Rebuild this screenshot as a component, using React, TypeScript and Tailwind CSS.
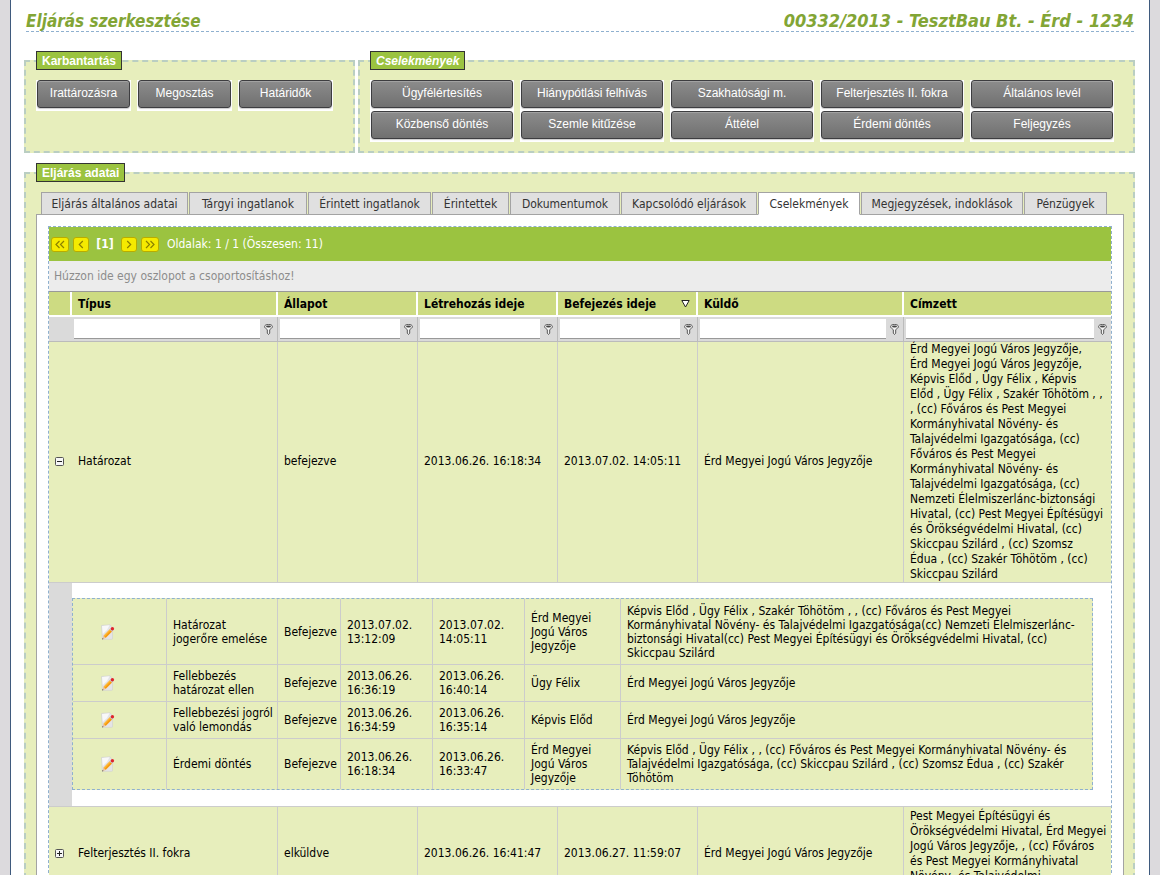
import React from "react";

type TabInfo = { label: string; width: string };

const tabs: TabInfo[] = [
  { label: "Eljárás általános adatai", width: "w-[147px]" },
  { label: "Tárgyi ingatlanok", width: "w-[118px]" },
  { label: "Érintett ingatlanok", width: "w-[123px]" },
  { label: "Érintettek", width: "w-[77px]" },
  { label: "Dokumentumok", width: "w-[110px]" },
  { label: "Kapcsolódó eljárások", width: "w-[136px]" },
  { label: "Cselekmények", width: "w-[102px]" },
  { label: "Megjegyzések, indoklások", width: "w-[162px]" },
  { label: "Pénzügyek", width: "w-[83px]" },
];

const maintenance = ["Irattározásra", "Megosztás", "Határidők"];

const actions = [
  "Ügyfélértesítés",
  "Hiánypótlási felhívás",
  "Szakhatósági m.",
  "Felterjesztés II. fokra",
  "Általános levél",
  "Közbenső döntés",
  "Szemle kitűzése",
  "Áttétel",
  "Érdemi döntés",
  "Feljegyzés",
];

const columns = ["Típus", "Állapot", "Létrehozás ideje", "Befejezés ideje", "Küldő", "Címzett"];

type Row = {
  type: string;
  status: string;
  created: string;
  finished: string;
  sender: string;
  recipients: string[];
};

const rowMain: Row = {
  type: "Határozat",
  status: "befejezve",
  created: "2013.06.26. 16:18:34",
  finished: "2013.07.02. 14:05:11",
  sender: "Érd Megyei Jogú Város Jegyzője",
  recipients: [
    "Érd Megyei Jogú Város Jegyzője,",
    "Érd Megyei Jogú Város Jegyzője,",
    "Képvis Előd , Ügy Félix , Képvis",
    "Előd , Ügy Félix , Szakér Töhötöm , ,",
    ", (cc) Főváros és Pest Megyei",
    "Kormányhivatal Növény- és",
    "Talajvédelmi Igazgatósága, (cc)",
    "Főváros és Pest Megyei",
    "Kormányhivatal Növény- és",
    "Talajvédelmi Igazgatósága, (cc)",
    "Nemzeti Élelmiszerlánc-biztonsági",
    "Hivatal, (cc) Pest Megyei Építésügyi",
    "és Örökségvédelmi Hivatal, (cc)",
    "Skiccpau Szilárd , (cc) Szomsz",
    "Édua , (cc) Szakér Töhötöm , (cc)",
    "Skiccpau Szilárd",
  ],
};

const rowNext: Row = {
  type: "Felterjesztés II. fokra",
  status: "elküldve",
  created: "2013.06.26. 16:41:47",
  finished: "2013.06.27. 11:59:07",
  sender: "Érd Megyei Jogú Város Jegyzője",
  recipients: [
    "Pest Megyei Építésügyi és",
    "Örökségvédelmi Hivatal, Érd Megyei",
    "Jogú Város Jegyzője, , (cc) Főváros",
    "és Pest Megyei Kormányhivatal",
    "Növény- és Talajvédelmi",
    "Igazgatósága",
  ],
};

const details = [
  {
    height: "h-[66px]",
    type: ["Határozat", "jogerőre emelése"],
    created: ["2013.07.02.", "13:12:09"],
    finished: ["2013.07.02.", "14:05:11"],
    sender: ["Érd Megyei", "Jogú Város", "Jegyzője"],
    recipients: [
      "Képvis Előd , Ügy Félix , Szakér Töhötöm , , (cc) Főváros és Pest Megyei",
      "Kormányhivatal Növény- és Talajvédelmi Igazgatósága(cc) Nemzeti Élelmiszerlánc-",
      "biztonsági Hivatal(cc) Pest Megyei Építésügyi és Örökségvédelmi Hivatal, (cc)",
      "Skiccpau Szilárd",
    ],
  },
  {
    height: "h-[37px]",
    type: ["Fellebbezés", "határozat ellen"],
    created: ["2013.06.26.", "16:36:19"],
    finished: ["2013.06.26.", "16:40:14"],
    sender: ["Ügy Félix"],
    recipients: ["Érd Megyei Jogú Város Jegyzője"],
  },
  {
    height: "h-[37px]",
    type: ["Fellebbezési jogról", "való lemondás"],
    created: ["2013.06.26.", "16:34:59"],
    finished: ["2013.06.26.", "16:35:14"],
    sender: ["Képvis Előd"],
    recipients: ["Érd Megyei Jogú Város Jegyzője"],
  },
  {
    height: "h-[50px]",
    type: ["Érdemi döntés"],
    created: ["2013.06.26.", "16:18:34"],
    finished: ["2013.06.26.", "16:33:47"],
    sender: ["Érd Megyei", "Jogú Város", "Jegyzője"],
    recipients: [
      "Képvis Előd , Ügy Félix , , (cc) Főváros és Pest Megyei Kormányhivatal Növény- és",
      "Talajvédelmi Igazgatósága, (cc) Skiccpau Szilárd , (cc) Szomsz Édua , (cc) Szakér",
      "Töhötöm",
    ],
  },
];

function Lines({ lines }: { lines: string[] }) {
  return <div className="whitespace-pre">{lines.join("\n")}</div>;
}

function Panel({ title, italic, className, children }: { title: string; italic?: boolean; className: string; children: React.ReactNode }) {
  return (
    <fieldset className={`min-w-0 border-2 border-dashed border-[#8fb0c8]/50 bg-[#e7eebc] pt-[10px] pr-[9px] pl-[10px] ${className}`}>
      <legend
        className={`border border-[#333333] bg-[#9bc340] px-[5px] pt-px font-['Liberation_Sans',Arial,sans-serif] text-[12px] leading-4 font-bold text-white ${italic ? "italic" : ""}`}
      >
        {title}
      </legend>
      {children}
    </fieldset>
  );
}

function ActionButton({ label, width }: { label: string; width: string }) {
  return (
    <button type="button" className={`h-[31px] bg-white px-px pb-[3px] ${width}`}>
      <span className="block h-7 rounded-[3px] border border-[#3d3d40] bg-linear-to-b from-[#8c8c8c] to-[#707070] font-['Liberation_Sans',Arial,sans-serif] text-[12px] leading-6 text-white shadow-[inset_0_1px_0_#a2a2a2,0_1px_1px_#cccccc]">
        {label}
      </span>
    </button>
  );
}

function PagerButton({ label, double, flip }: { label: string; double?: boolean; flip?: boolean }) {
  return (
    <button
      type="button"
      aria-label={label}
      className={`flex h-[15px] items-center justify-center rounded-[3px] border border-[#b8ac00] bg-[#f5ea00] ${double ? "w-[18px]" : "w-4"}`}
    >
      <svg width={double ? 10 : 6} height="9" viewBox={double ? "0 0 10 9" : "0 0 6 9"} fill="none" stroke="#8a8100" strokeWidth="1.2">
        {double ? (
          <path d={flip ? "M1 1 4.5 4.5 1 8M5.5 1 9 4.5 5.5 8" : "M4.5 1 1 4.5 4.5 8M9 1 5.5 4.5 9 8"} />
        ) : (
          <path d={flip ? "M1.2 1 4.7 4.5 1.2 8" : "M4.8 1 1.3 4.5 4.8 8"} />
        )}
      </svg>
    </button>
  );
}

function FilterIcon() {
  return (
    <svg width="9" height="11" viewBox="0 0 9 11" fill="none">
      <path d="M.6 2.6C.6 1.2 2.2.5 4.5.5s3.9.7 3.9 2.1c0 1.3-1.5 2-2.7 3.1V9.2L4.5 10.5 3.3 9.2V5.7C2.1 4.6.6 3.9.6 2.6Z" fill="#f4f4f4" stroke="#555" strokeWidth="1" />
      <ellipse cx="4.5" cy="2.5" rx="2.5" ry="1.1" fill="#444" />
    </svg>
  );
}

function EditIcon() {
  return (
    <svg width="15" height="16" viewBox="0 0 15 16" fill="none">
      <path d="M1.5 1.5 10 .8 12.5 4v10.5a.8.8 0 0 1-.8.8H3.2a.9.9 0 0 1-.9-.8z" fill="#e4e4e6" stroke="#d0d0d2" strokeWidth=".6" />
      <path d="M2 2 9.5 1.3 7 6 2.8 10z" fill="#f8f8f9" />
      <path d="M4.5 13 11 6.3" stroke="#f79a10" strokeWidth="3.2" />
      <path d="M4 12.3 10.5 5.6" stroke="#ffbe3c" strokeWidth="1.1" />
      <path d="M10.8 6.5 12 5.2" stroke="#c3c6ce" strokeWidth="3.2" />
      <circle cx="12.4" cy="4.7" r="1.7" fill="#e0242c" />
      <path d="M3.4 11.8 2 15.4l3.7-1.3z" fill="#e6c3a0" />
      <path d="M2.6 14 2 15.4l1.5-.5z" fill="#555" />
    </svg>
  );
}

function ExpandButton({ open }: { open?: boolean }) {
  return (
    <button type="button" aria-label={open ? "Összecsukás" : "Kibontás"} className="mx-auto block">
      <svg width="9" height="9" viewBox="0 0 9 9">
        <rect x=".5" y=".5" width="8" height="8" rx="1" fill="#f7f7f7" stroke="#555555" />
        <path d={open ? "M2 4.5h5" : "M2 4.5h5M4.5 2v5"} stroke="#222222" />
      </svg>
    </button>
  );
}

function GridRow({ row, open }: { row: Row; open?: boolean }) {
  const cell = "border-r border-b border-[#cccccc] pb-[2px] px-[6px]";
  return (
    <tr className="h-[95px] bg-[#e7eebc]">
      <td className="border-b border-[#cccccc] pr-[2px] pb-[2px]">
        <ExpandButton open={open} />
      </td>
      <td className={cell}>{row.type}</td>
      <td className={cell}>{row.status}</td>
      <td className={cell}>{row.created}</td>
      <td className={cell}>{row.finished}</td>
      <td className={cell}>{row.sender}</td>
      <td className="border-b border-[#cccccc] pl-[6px]">
        <Lines lines={row.recipients} />
      </td>
    </tr>
  );
}

function DetailTable() {
  const cell = "border-r border-b border-[#cccccc] px-[6px] group-last:border-b-0";
  return (
    <table className="w-full table-fixed border-separate border-spacing-0 border border-dashed border-[#8fb0cf] bg-[#e7eebc] leading-[14px]">
      <colgroup>
        <col className="w-[94px]" />
        <col className="w-[111px]" />
        <col className="w-[63px]" />
        <col className="w-[92px]" />
        <col className="w-[92px]" />
        <col className="w-[96px]" />
        <col />
      </colgroup>
      <tbody>
        {details.map((d, i) => (
          <tr key={i} className={`group ${d.height}`}>
            <td className={cell}>
              <button type="button" aria-label="Szerkesztés" className="ml-[21px] block">
                <EditIcon />
              </button>
            </td>
            <td className={cell}>
              <Lines lines={d.type} />
            </td>
            <td className={cell}>Befejezve</td>
            <td className={cell}>
              <Lines lines={d.created} />
            </td>
            <td className={cell}>
              <Lines lines={d.finished} />
            </td>
            <td className={cell}>
              <Lines lines={d.sender} />
            </td>
            <td className="border-b border-[#cccccc] px-[6px] group-last:border-b-0">
              <Lines lines={d.recipients} />
            </td>
          </tr>
        ))}
      </tbody>
    </table>
  );
}

function Grid() {
  return (
    <div className="border border-dashed border-[#8fb0cf]">
      <div className="flex h-[34px] items-center gap-1 bg-[#9bc340] px-[2px] text-white">
        <PagerButton label="Első oldal" double />
        <PagerButton label="Előző oldal" />
        <span className="w-6 pt-px text-center font-bold">[1]</span>
        <PagerButton label="Következő oldal" flip />
        <PagerButton label="Utolsó oldal" double flip />
        <span className="ml-1 pt-px">Oldalak: 1 / 1 (Összesen: 11)</span>
      </div>
      <div className="h-[31px] border-b border-[#999999] bg-[#ececec] px-[5px] leading-[30px] text-[#8c8c8c]">
        Húzzon ide egy oszlopot a csoportosításhoz!
      </div>
      <table className="w-full table-fixed border-separate border-spacing-0">
        <colgroup>
          <col className="w-[23px]" />
          <col className="w-[206px]" />
          <col className="w-[140px]" />
          <col className="w-[140px]" />
          <col className="w-[140px]" />
          <col className="w-[206px]" />
          <col />
        </colgroup>
        <thead>
          <tr className="h-[25px] bg-[#cddb82] text-left">
            <td className="border-r-2 border-b-2 border-white" />
            {columns.map((c, i) => (
              <th key={c} scope="col" className={`border-b-2 border-white px-[6px] pt-px font-bold ${i < 5 ? "border-r-2" : ""}`}>
                <div className="flex items-center justify-between">
                  {c}
                  {c === "Befejezés ideje" && (
                    <svg width="9" height="8" viewBox="0 0 9 8" fill="#ffffff" stroke="#222222">
                      <path d="M.8.5h7.4L4.5 7z" />
                    </svg>
                  )}
                </div>
              </th>
            ))}
          </tr>
          <tr className="h-[25px] bg-[#dadada]">
            <td className="border-b border-[#bbbbbb]" />
            {columns.map((c, i) => (
              <td key={c} className={`border-b border-[#bbbbbb] pl-[2px] ${i < 5 ? "border-r" : ""}`}>
                <div className="flex items-center">
                  <input aria-label={`${c} szűrő`} className="h-5 min-w-0 flex-1 border-b border-[#999999] bg-white px-1 outline-none" />
                  <button type="button" aria-label={`${c} szűrőfeltétel`} className="flex w-[17px] justify-center">
                    <FilterIcon />
                  </button>
                </div>
              </td>
            ))}
          </tr>
        </thead>
        <tbody>
          <GridRow row={rowMain} open />
          <tr>
            <td className="border-b border-[#cccccc] bg-[#dadada]" />
            <td colSpan={6} className="border-b border-[#cccccc] bg-white pt-[15px] pr-[18px] pb-4">
              <DetailTable />
            </td>
          </tr>
          <GridRow row={rowNext} />
        </tbody>
      </table>
    </div>
  );
}

export default function App() {
  return (
    <div className="min-h-screen bg-[#dcdadd] px-[10px] font-['DejaVu_Sans_Condensed',Tahoma,sans-serif] text-[12px] leading-[15px] text-black">
      <main className="min-h-screen border-x border-[#3f5a7d] bg-white pt-[9px] pr-[14px] pl-[13px]">
        <header className="mr-px ml-[2px] flex h-[23px] items-end justify-between border-b border-dashed border-[#8fb0cf] leading-5 font-bold text-[#82a535] italic">
          <h1 className="text-[17px]">Eljárás szerkesztése</h1>
          <h2 className="text-[18px]">00332/2013 - TesztBau Bt. - Érd - 1234</h2>
        </header>
        <div className="mt-[19px] flex gap-[3px]">
          <Panel title="Karbantartás" className="h-[102px] w-[331px]">
            <div className="flex gap-[6px]">
              {maintenance.map((b) => (
                <ActionButton key={b} label={b} width="w-[95px]" />
              ))}
            </div>
          </Panel>
          <Panel title="Cselekmények" italic className="h-[102px] flex-1">
            <div className="grid grid-cols-[repeat(5,144px)] gap-x-[6px]">
              {actions.map((b) => (
                <ActionButton key={b} label={b} width="w-full" />
              ))}
            </div>
          </Panel>
        </div>
        <Panel title="Eljárás adatai" className="mt-[10px] w-full pb-3">
          <nav className="flex gap-px px-[5px]">
            {tabs.map((t) => (
              <button
                key={t.label}
                type="button"
                className={`h-[23px] border border-[#a3a3a3] pt-px whitespace-nowrap text-[#333333] ${t.width} ${
                  t.label === "Cselekmények" ? "z-10 border-b-white bg-white" : "bg-[#e0e0e0]"
                }`}
              >
                {t.label}
              </button>
            ))}
          </nav>
          <div className="-mt-px border border-[#a3a3a3] bg-white p-[11px]">
            <Grid />
          </div>
        </Panel>
      </main>
    </div>
  );
}
